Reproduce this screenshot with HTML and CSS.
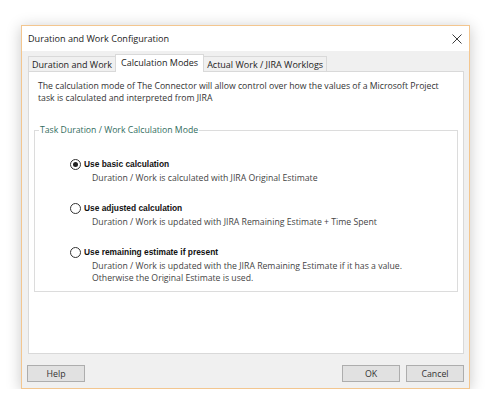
FILE: index.html
```html
<!DOCTYPE html>
<html>
<head>
<meta charset="utf-8">
<link rel="stylesheet" href="styles.css">
</head>
<body>
<div class="dialog">
  <div class="titlebar">
    <span class="title">Duration and Work Configuration</span>
    <svg class="close" width="10" height="10" viewBox="0 0 10 10"><path d="M0.5 0.5 L9.5 9.5 M9.5 0.5 L0.5 9.5" stroke="#3c3c3c" stroke-width="1" fill="none"/></svg>
  </div>
  <div class="body">
    <div class="tabs">
      <div class="tab">Duration and Work</div>
      <div class="tab active">Calculation Modes</div>
      <div class="tab">Actual Work / JIRA Worklogs</div>
    </div>
    <div class="panel">
      <p class="intro">The calculation mode of The Connector will allow control over how the values of a Microsoft Project task is calculated and interpreted from JIRA</p>
      <fieldset class="group">
        <legend class="legend">Task Duration / Work Calculation Mode</legend>
        <div class="options">
          <div class="option">
            <div class="opt-head"><span class="radio checked"></span><span class="opt-label">Use basic calculation</span></div>
            <div class="opt-desc">Duration / Work is calculated with JIRA Original Estimate</div>
          </div>
          <div class="option">
            <div class="opt-head"><span class="radio"></span><span class="opt-label">Use adjusted calculation</span></div>
            <div class="opt-desc">Duration / Work is updated with JIRA Remaining Estimate + Time Spent</div>
          </div>
          <div class="option">
            <div class="opt-head"><span class="radio"></span><span class="opt-label">Use remaining estimate if present</span></div>
            <div class="opt-desc">Duration / Work is updated with the JIRA Remaining Estimate if it has a value.<br>Otherwise the Original Estimate is used.</div>
          </div>
        </div>
      </fieldset>
    </div>
    <div class="buttons">
      <button class="btn">Help</button>
      <span class="spacer"></span>
      <button class="btn">OK</button>
      <button class="btn">Cancel</button>
    </div>
  </div>
</div>
</body>
</html>
```
FILE: styles.css
```css
* { box-sizing: border-box; }
html, body { margin: 0; padding: 0; background: #ffffff; }
body {
  font-family: "Open Sans", "Noto Sans", sans-serif;
  font-size: 8.7px;
  color: #333333;
  padding: 25px 0 0 21px;
}
.dialog {
  width: 449px;
  height: 364px;
  border: 1px solid #f3c68f;
  background: #f0f0f0;
  box-shadow: 0 2px 14px rgba(0, 0, 0, 0.22);
  display: flex;
  flex-direction: column;
}
.titlebar {
  height: 25px;
  background: #ffffff;
  display: flex;
  align-items: center;
  padding: 0 6px 0 6px;
  flex: none;
}
.title {
  flex: 1;
  font-size: 9.1px;
  color: #222222;
}
.close { margin-right: 1px; margin-top: 1px; }
.body {
  flex: 1;
  display: flex;
  flex-direction: column;
  padding: 3px 5px 0 6px;
}
.tabs {
  display: flex;
  align-items: flex-end;
  height: 17px;
  flex: none;
  position: relative;
  z-index: 1;
}
.tab {
  height: 15px;
  padding: 0 3px;
  border: 1px solid #d9d9d9;
  border-bottom: none;
  background: #f0f0f0;
  color: #222222;
  display: flex;
  align-items: center;
  margin-right: -1px;
  font-size: 9px;
}
.tab.active {
  height: 18px;
  margin-bottom: -1px;
  background: #ffffff;
  padding: 0 5px 2px 5px;
}
.panel {
  height: 283px;
  flex: none;
  background: #ffffff;
  border: 1px solid #d9d9d9;
  padding: 8px 5px 0 5px;
}
.intro {
  margin: 0 0 20px 0;
  padding: 0 12px 0 4px;
  line-height: 12px;
  color: #333333;
}
.group {
  margin: 0;
  padding: 0 0 7px 0;
  border: 1px solid #dcdcdc;
  min-width: 0;
}
.legend {
  margin-left: 4px;
  padding: 0 1px;
  line-height: 12px;
  color: #336d60;
}
.options {
  padding: 22px 0 0 35px;
  display: flex;
  flex-direction: column;
  gap: 18px;
}
.opt-head {
  display: flex;
  align-items: center;
  height: 12px;
}
.radio {
  width: 11px;
  height: 11px;
  border: 1px solid #333333;
  border-radius: 50%;
  background: #ffffff;
  display: flex;
  align-items: center;
  justify-content: center;
  flex: none;
}
.radio.checked::after {
  content: "";
  width: 5px;
  height: 5px;
  border-radius: 50%;
  background: #222222;
}
.opt-label {
  margin-left: 3px;
  font-family: "Liberation Sans", Arial, sans-serif;
  font-weight: bold;
  font-size: 8.4px;
  color: #111111;
}
.opt-desc {
  margin: 2px 0 0 22px;
  line-height: 12px;
  color: #444444;
}
.buttons {
  display: flex;
  gap: 6px;
  margin: 11px 0 0 -1px;
}
.spacer { flex: 1; }
.btn {
  width: 58px;
  height: 17px;
  padding: 0;
  background: #e1e1e1;
  border: 1px solid #adadad;
  font-family: "Open Sans", "Noto Sans", sans-serif;
  font-size: 8.8px;
  color: #333333;
}
```
